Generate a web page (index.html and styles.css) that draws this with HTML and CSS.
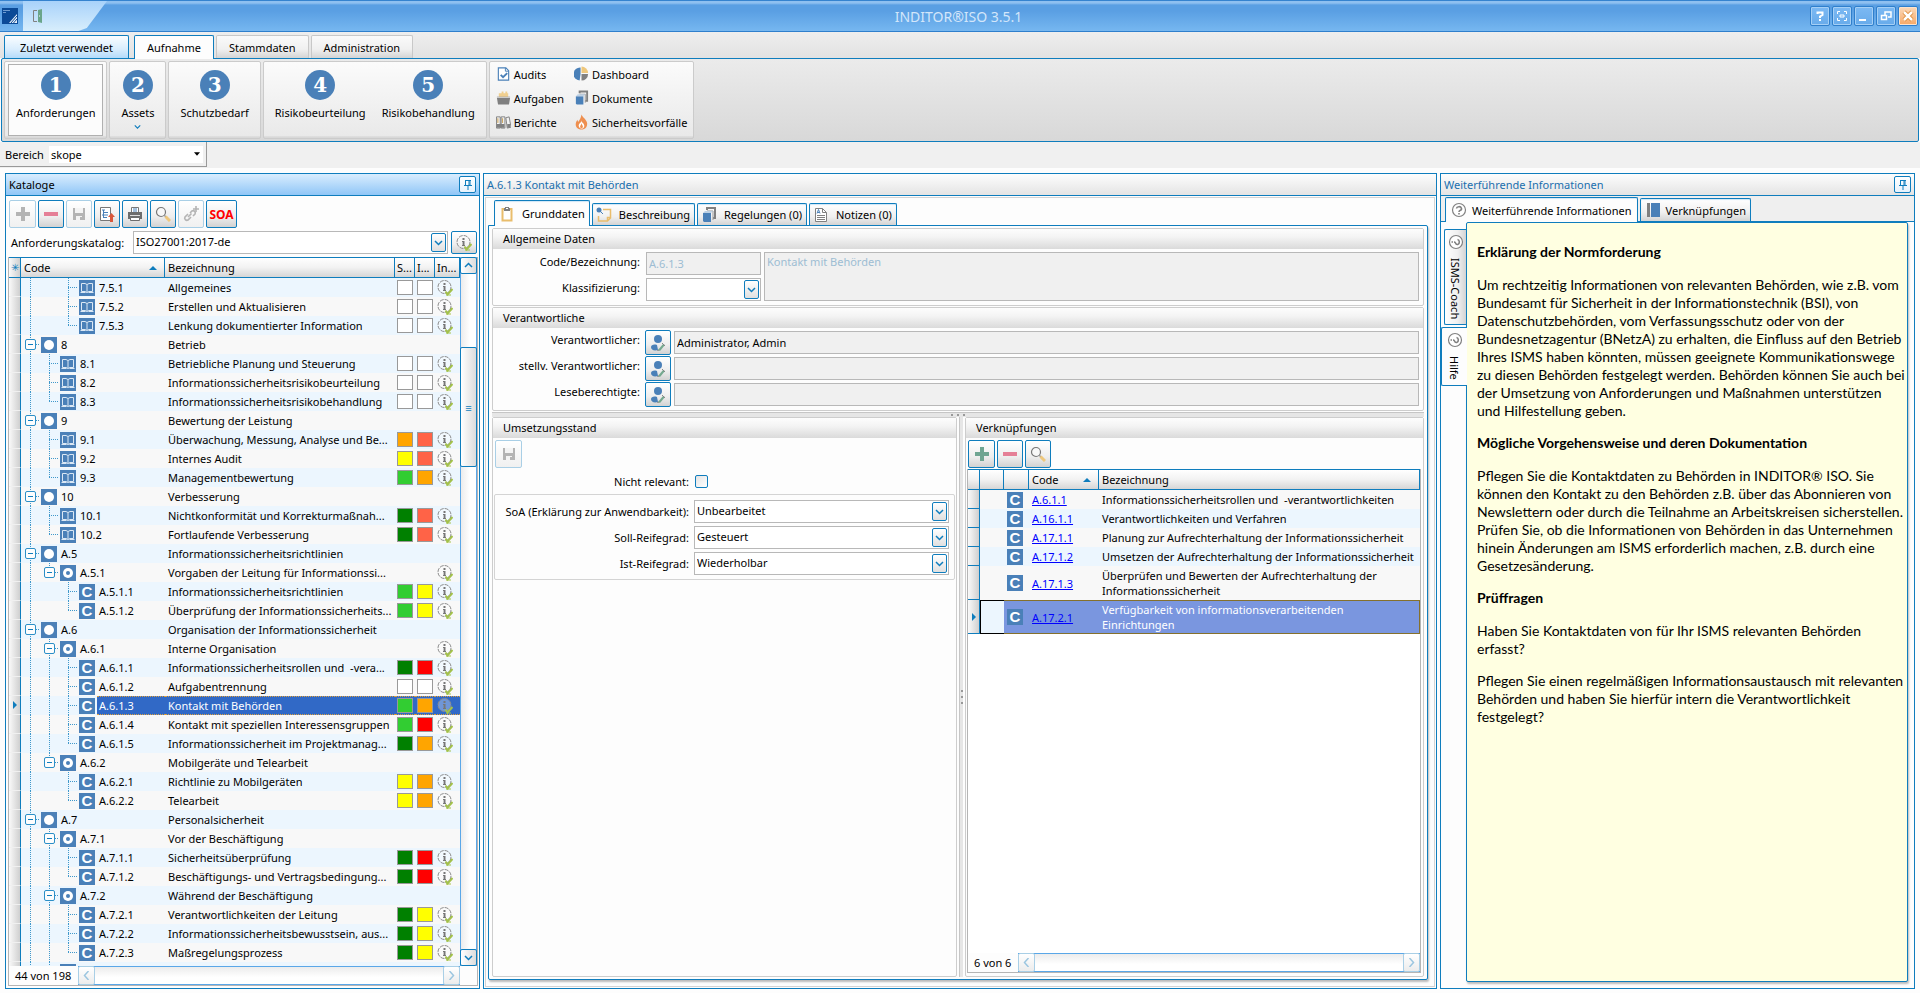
FILE: index.html
```html
<!DOCTYPE html>
<html lang="de">
  <head>
    <meta charset="UTF-8">
    <meta name="viewport" content="width=device-width, initial-scale=1.0">
    <title>INDITOR®ISO 3.5.1</title>
    <link rel="stylesheet" href="styles.css">
  </head>
  <body>
    <svg class="sprite" aria-hidden="true">
      <symbol id="i-plus" viewBox="0 0 16 16"><path d="M6 1h4v5h5v4h-5v5H6v-5H1V6h5z" fill="currentColor"/></symbol>
      <symbol id="i-minus" viewBox="0 0 16 16"><path d="M1 6h14v4H1z" fill="currentColor"/></symbol>
      <symbol id="i-save" viewBox="0 0 16 16"><path d="M2 2h12v12H2z" fill="#b4b4b4"/><path d="M4 2h8v5H4zM5 10h6v4H5z" fill="#f4f4f4"/><path d="M9 11h2v3H9z" fill="#b4b4b4"/></symbol>
      <symbol id="i-export" viewBox="0 0 16 16"><path d="M1.500 1.500h10v13h-10z" fill="#fff" stroke="#777"/><path d="M3 4h3M5 6.500h4M3 9h1M5 9h4M5 11.500h3M4.500 4v8" stroke="#4a80b8" fill="none"/><path d="M12.500 7l3.500 4h-2v5h-3v-5H9z" fill="#d9583b"/></symbol>
      <symbol id="i-print" viewBox="0 0 16 16"><path d="M4.500 6V1.500h7V6" fill="#fff" stroke="#777"/><path d="M6 3h4M6 5h4" stroke="#4a80b8"/><path d="M1 6h14v7H1z" fill="#6d6d6d"/><path d="M3 9h10v1H3z" fill="#ddd"/><path d="M3.500 11.500h9v3h-9z" fill="#fff" stroke="#6d6d6d"/></symbol>
      <symbol id="i-search" viewBox="0 0 16 16"><circle cx="6" cy="6" r="4.500" fill="#f8f8f8" stroke="#777" stroke-width="1.200"/><path d="M9 9l2 2" stroke="#999" stroke-width="1.500"/><path d="M10.500 10.500L15 15" stroke="#eec77c" stroke-width="3"/></symbol>
      <symbol id="i-link" viewBox="0 0 16 16"><g fill="none" stroke="#b4b4b4" stroke-width="1.600"><path d="M5 8L2 11a2.200 2.200 0 0 0 3 3l3-3M5 11l3.500-3.500"/><path d="M7 7l2-2a2.200 2.200 0 0 1 3 3l-2 2"/><path d="M10 3h6M13 0v6"/></g></symbol>
      <symbol id="i-info" viewBox="0 0 16 16"><circle cx="7.500" cy="7" r="6.500" fill="#fff" fill-opacity=".3" stroke="#8b8b8b" stroke-dasharray="4 1"/><path d="M6.500 3h2v2h-2zM6 6h2.500v4H9v1H6v-1h.6V7H6z" fill="#777"/><path d="M8.500 11.500l2 3L15.500 9" fill="none" stroke="#a3c14a" stroke-width="2"/><path d="M9 15h5" stroke="#a3c14a"/></symbol>
      <symbol id="i-user" viewBox="0 0 16 16"><circle cx="8" cy="4" r="4" fill="#4a80b8"/><path d="M1 12c0-2 3-3 6-2l1 5c-4 1-7 0-7-3z" fill="#4a80b8"/><path d="M8 15l5-6 2 1-5 6z" fill="#74a98f"/><path d="M12 8l3 3M7 16l2-1" stroke="#888"/></symbol>
      <symbol id="i-book" viewBox="0 0 16 16"><path d="M0 0h16v16H0z" fill="#4a80b8"/><path d="M2.500 3.500h3.500l2 1 2-1h3.500v8H10l-2 1-2-1H2.500zM8 4.500v8M1.500 12.500h5M9.500 12.500h5" fill="none" stroke="#dbe8f5"/></symbol>
      <symbol id="i-dot" viewBox="0 0 16 16"><path d="M0 0h16v16H0z" fill="#4a80b8"/><circle cx="8" cy="8" r="5" fill="#fff"/></symbol>
      <symbol id="i-target" viewBox="0 0 16 16"><path d="M0 0h16v16H0z" fill="#4a80b8"/><circle cx="8" cy="8" r="5" fill="#fff"/><circle cx="8" cy="8" r="2" fill="#4a80b8"/></symbol>
      <symbol id="i-minusbox" viewBox="0 0 11 11"><rect x=".5" y=".5" width="10" height="10" rx="1.500" fill="#fdfdfd" stroke="#2c8fc7"/><path d="M3 5.500h5" stroke="#0f7dbd"/></symbol>
      <symbol id="i-down" viewBox="0 0 9 9"><path d="M1 3l3.500 3.500L8 3" fill="none" stroke="currentColor" stroke-width="1.500"/></symbol>
      <symbol id="i-up" viewBox="0 0 9 9"><path d="M1 6l3.500-3.500L8 6" fill="none" stroke="currentColor" stroke-width="1.500"/></symbol>
      <symbol id="i-left" viewBox="0 0 9 9"><path d="M6.500 0L2.500 4.500l4 4.500" fill="none" stroke="currentColor" stroke-width="1.500"/></symbol>
      <symbol id="i-right" viewBox="0 0 9 9"><path d="M2.500 0l4 4.500-4 4.500" fill="none" stroke="currentColor" stroke-width="1.500"/></symbol>
      <symbol id="i-sort" viewBox="0 0 8 4"><path d="M0 4l4-4 4 4z" fill="#0f7dbd"/></symbol>
      <symbol id="i-pin" viewBox="0 0 10 10"><path d="M2.500 0v5.500M7 0v5.500M6 0v5.500M2 .5h6M1 5.500h8M5 6v4" fill="none" stroke="#0f7dbd"/></symbol>
      <symbol id="i-help" viewBox="0 0 16 16"><circle cx="8" cy="8" r="6.500" fill="#fff" stroke="#808080" stroke-width="1.200"/><path d="M5.500 6.500a2.500 2 0 1 1 3.500 2q-1 .5-1 1.500M8 11v1.500" fill="none" stroke="#808080" stroke-width="1.600"/></symbol>
      <symbol id="i-clipboard" viewBox="0 0 16 16"><path d="M3.500 3h9v11.500h-9z" fill="#fff" stroke="#e9bd6c" stroke-width="2"/><path d="M5 2h1V1h4v1h1v3H5z" fill="#808080"/><path d="M7 2h2v1H7z" fill="#fff"/></symbol>
      <symbol id="i-note" viewBox="0 0 16 16"><path d="M7 2.500h7.500v8.500l-3 3h-9V9M11.500 14v-3.500h3" fill="none" stroke="#e9bd6c" stroke-width="1.500"/><circle cx="3" cy="3" r="2.500" fill="#4a80b8"/><path d="M4 4l3 3" stroke="#4a80b8"/></symbol>
      <symbol id="i-docs" viewBox="0 0 16 16"><path d="M6 3V1h8v10h-2" fill="none" stroke="#808080" stroke-width="2"/><path d="M6 4h6v9" fill="none" stroke="#999"/><path d="M2 6h8v9H3L2 14z" fill="#4a80b8"/><path d="M2 6l2-2h8l-2 2z" fill="#bcd0e4"/></symbol>
      <symbol id="i-notes" viewBox="0 0 16 16"><path d="M2.500 1.500h7l4 4v9h-11z" fill="#fff" stroke="#808080"/><path d="M9.500 1.500v4h4" fill="none" stroke="#808080"/><path d="M4 8.500h8M4 10.500h8M4 12.500h8" stroke="#808080"/><path d="M4 6.500l1.500-4 1.500 4M4.500 5.500h2" fill="none" stroke="#4a80b8"/></symbol>
      <symbol id="i-bookside" viewBox="0 0 16 16"><path d="M2 1h3v14H2z" fill="#808080"/><path d="M6 1h9v14H6z" fill="#4a80b8"/></symbol>
      <symbol id="i-audit" viewBox="0 0 16 16"><path d="M2.500 1.500h8l3 3v10h-11z" fill="#fff" stroke="#4a80b8" stroke-width="1.200"/><path d="M10 1.500V5h3.500" fill="none" stroke="#4a80b8"/><path d="M5 9l2.500 2.500L12 7" fill="none" stroke="#4a80b8" stroke-width="2"/></symbol>
      <symbol id="i-tasks" viewBox="0 0 16 16"><path d="M3 7V3h3V1h2v2h2V1h2v2h1v4z" fill="#f0cf8f"/><path d="M1 8h14l-1 6q0 1-1 1H3q-1 0-1-1z" fill="#808080"/><path d="M1 7h14" stroke="#aaa"/></symbol>
      <symbol id="i-reports" viewBox="0 0 16 16"><path d="M.5 2.500h4v12h-4zM5.500 2.500h4v12h-4zM10.500 3.500l3.500-1 2 11-4 1z" fill="#f3f3f3" stroke="#808080"/><path d="M2 4v5M7 4v5" stroke="#c79d4d"/><path d="M1 10h8v4H1zM12 10h3v4h-3z" fill="#808080"/></symbol>
      <symbol id="i-pie" viewBox="0 0 16 16"><path d="M7 1v7l-1 7A7 7 0 0 1 7 1z" fill="#4a80b8"/><path d="M8 0a7 7 0 0 1 7 7H8z" fill="#eec77c"/><path d="M8 8h7a7 7 0 0 1-7 7z" fill="#808080"/></symbol>
      <symbol id="i-fire" viewBox="0 0 16 16"><path d="M8 0c1 3 5 5 6 9 .5 4-2 7-6 7s-7-3-6-7c.4-1.600 1-2 1.500-3.500.6 1 .8 1.600.8 2.500C6 6 7.500 3.500 8 0z" fill="#ee8f4f"/><path d="M8 6c0 3 3 3 3 6 0 2-1 3-3 3s-3-2-3-3c0-3 3-3 3-6z" fill="#fff"/><path d="M8 9c0 2 1.500 2 1.500 4S6.500 15 6.500 13 8 11 8 9z" fill="#ee8f4f"/></symbol>
    </svg>

    <header class="titlebar">
      <svg class="titlebar__logo" viewBox="0 0 16 16"><path d="M0 0h16v16H0z" fill="#0b4a97"/><path d="M1 2.500h7M1 4.500h3" stroke="#6f9cd0"/><path d="M7 15L15 6v9z" fill="#e8f0f8"/><path d="M9 15l6-7M11.500 15l3.500-4" stroke="#0b4a97"/></svg>
      <div class="titlebar__quick">
        <svg viewBox="0 0 16 16"><path d="M6 2.500H2.500v11H6" fill="none" stroke="#808080"/><path d="M7 2l4-1v14l-4-1z" fill="#6aa58a"/><path d="M8 8h1" stroke="#fff"/></svg>
      </div>
      <h1 class="titlebar__text">INDITOR®ISO 3.5.1</h1>
      <div class="titlebar__buttons">
        <button class="winbtn" aria-label="Hilfe"><svg viewBox="0 0 12 12"><path d="M3.500 4V2.500h5V5L6 6.500V8M6 9v2" fill="none" stroke="#fff" stroke-width="2"/></svg></button>
        <button class="winbtn" aria-label="Vollbild"><svg viewBox="0 0 12 12"><path d="M1.500 4V1.500H4M8 1.500h2.500V4M1.500 8v2.500H4M8 10.500h2.500V8M4 5h4v2H4z" fill="none" stroke="#fff"/></svg></button>
        <button class="winbtn" aria-label="Minimieren"><svg viewBox="0 0 12 12"><path d="M1 9h7v2H1z" fill="#fff"/></svg></button>
        <button class="winbtn" aria-label="Wiederherstellen"><svg viewBox="0 0 12 12"><path d="M5 5V2h6v5H8M1.500 5.500h5v4h-5z" fill="none" stroke="#fff" stroke-width="1.500"/></svg></button>
        <button class="winbtn winbtn--close" aria-label="Schließen"><svg viewBox="0 0 12 12"><path d="M2 2l8 8M10 2l-8 8" stroke="#d9822b" stroke-width="4"/><path d="M2 2l8 8M10 2l-8 8" stroke="#fff" stroke-width="2.500"/></svg></button>
      </div>
    </header>

    <nav class="tabs">
      <button class="tabs__tab tabs__tab--recent">Zuletzt verwendet</button>
      <button class="tabs__tab tabs__tab--active">Aufnahme</button>
      <button class="tabs__tab">Stammdaten</button>
      <button class="tabs__tab">Administration</button>
    </nav>

    <section class="ribbon">
      <div class="ribbon__group">
        <button class="step step--active"><span class="step__no">1</span>Anforderungen</button>
      </div>
      <div class="ribbon__group">
        <button class="step"><span class="step__no">2</span>Assets<svg class="step__more"><use href="#i-down"/></svg></button>
      </div>
      <div class="ribbon__group">
        <button class="step"><span class="step__no">3</span>Schutzbedarf</button>
      </div>
      <div class="ribbon__group">
        <button class="step"><span class="step__no">4</span>Risikobeurteilung</button>
        <button class="step"><span class="step__no">5</span>Risikobehandlung</button>
      </div>
      <div class="ribbon__group ribbon__group--grid">
        <button class="link"><svg><use href="#i-audit"/></svg>Audits</button>
        <button class="link"><svg><use href="#i-pie"/></svg>Dashboard</button>
        <button class="link"><svg><use href="#i-tasks"/></svg>Aufgaben</button>
        <button class="link"><svg><use href="#i-docs"/></svg>Dokumente</button>
        <button class="link"><svg><use href="#i-reports"/></svg>Berichte</button>
        <button class="link"><svg><use href="#i-fire"/></svg>Sicherheitsvorfälle</button>
      </div>
    </section>

    <div class="scope">
      <div class="scope__box">
        <label for="bereich">Bereich</label>
        <div class="scope__combo">
          <select id="bereich"><option>skope</option></select>
          <svg viewBox="0 0 7 4"><path d="M0 0h7L3.500 4z"/></svg>
        </div>
      </div>
    </div>

    <main class="main">
      <section class="panel panel--left">
        <header class="panel__head panel__head--active">
          <h2>Kataloge</h2>
          <button class="pin" aria-label="Anheften"><svg><use href="#i-pin"/></svg></button>
        </header>
        <div class="toolbar">
          <button class="tool is-off c-gray" aria-label="Neu"><svg><use href="#i-plus"/></svg></button>
          <button class="tool c-red" aria-label="Löschen"><svg><use href="#i-minus"/></svg></button>
          <button class="tool is-off" aria-label="Speichern"><svg><use href="#i-save"/></svg></button>
          <button class="tool" aria-label="Exportieren"><svg><use href="#i-export"/></svg></button>
          <button class="tool" aria-label="Drucken"><svg><use href="#i-print"/></svg></button>
          <button class="tool" aria-label="Suchen"><svg><use href="#i-search"/></svg></button>
          <button class="tool is-off" aria-label="Verknüpfen"><svg><use href="#i-link"/></svg></button>
          <button class="tool tool--soa">SOA</button>
        </div>
        <div class="catalog">
          <label for="katalog">Anforderungskatalog:</label>
          <div class="combo">
            <select id="katalog"><option>ISO27001:2017-de</option></select>
            <span class="combo__btn"><svg><use href="#i-down"/></svg></span>
          </div>
          <button class="tool tool--small" aria-label="Info"><svg><use href="#i-info"/></svg></button>
        </div>
        <div class="grid">
          <div class="grid__body">
            <div class="grid__view">
              <table class="tree">
                <colgroup><col class="w-ind"><col class="w-code"><col><col class="w-sw"><col class="w-sw"><col class="w-info"></colgroup>
                <thead>
                  <tr>
                    <th class="ind">✳</th>
                    <th><span class="sorted">Code<svg><use href="#i-sort"/></svg></span></th>
                    <th>Bezeichnung</th>
                    <th>S...</th>
                    <th>I...</th>
                    <th>In...</th>
                  </tr>
                </thead>
                <tbody id="tree"></tbody>
              </table>
            </div>
            <div class="vscroll">
              <button class="vscroll__btn" aria-label="Nach oben"><svg><use href="#i-up"/></svg></button>
              <div class="vscroll__track"><div class="vscroll__thumb">≡</div></div>
              <button class="vscroll__btn" aria-label="Nach unten"><svg><use href="#i-down"/></svg></button>
            </div>
          </div>
          <div class="grid__foot">
            <span class="grid__count">44 von 198</span>
            <div class="hscroll">
              <button class="hscroll__btn" aria-label="Nach links"><svg><use href="#i-left"/></svg></button>
              <div class="hscroll__track"></div>
              <button class="hscroll__btn" aria-label="Nach rechts"><svg><use href="#i-right"/></svg></button>
            </div>
          </div>
        </div>
      </section>

      <section class="panel panel--center">
        <header class="panel__head"><h2>A.6.1.3 Kontakt mit Behörden</h2></header>
        <div class="panel__frame">
          <div class="subtabs">
            <button class="subtab subtab--active"><svg><use href="#i-clipboard"/></svg>Grunddaten</button>
            <button class="subtab"><svg><use href="#i-note"/></svg>Beschreibung</button>
            <button class="subtab"><svg><use href="#i-docs"/></svg>Regelungen (0)</button>
            <button class="subtab"><svg><use href="#i-notes"/></svg>Notizen (0)</button>
          </div>
          <div class="page">
            <section class="group">
              <h3 class="group__head">Allgemeine Daten</h3>
              <div class="form form--general">
                <label for="code">Code/Bezeichnung:</label>
                <input class="field" id="code" value="A.6.1.3" disabled>
                <textarea class="field form__desc" aria-label="Bezeichnung" disabled>Kontakt mit Behörden</textarea>
                <label for="klasse">Klassifizierung:</label>
                <div class="combo">
                  <select id="klasse"><option></option></select>
                  <span class="combo__btn"><svg><use href="#i-down"/></svg></span>
                </div>
              </div>
            </section>
            <section class="group">
              <h3 class="group__head">Verantwortliche</h3>
              <div class="form form--people">
                <label for="verantw">Verantwortlicher:</label>
                <button class="tool tool--user" aria-label="Auswählen"><svg><use href="#i-user"/></svg></button>
                <input class="field" id="verantw" value="Administrator, Admin" readonly>
                <label for="stellv">stellv. Verantwortlicher:</label>
                <button class="tool tool--user" aria-label="Auswählen"><svg><use href="#i-user"/></svg></button>
                <input class="field" id="stellv" readonly>
                <label for="lese">Leseberechtigte:</label>
                <button class="tool tool--user" aria-label="Auswählen"><svg><use href="#i-user"/></svg></button>
                <input class="field" id="lese" readonly>
              </div>
            </section>
            <div class="split split--h"><i></i><i></i><i></i></div>
            <div class="lower">
              <section class="group group--state">
                <h3 class="group__head">Umsetzungsstand</h3>
                <div class="toolbar toolbar--group">
                  <button class="tool is-off" aria-label="Speichern"><svg><use href="#i-save"/></svg></button>
                </div>
                <div class="check">
                  <label for="relevant">Nicht relevant:</label>
                  <input type="checkbox" id="relevant">
                </div>
                <div class="form form--state">
                  <label for="soa">SoA (Erklärung zur Anwendbarkeit):</label>
                  <div class="combo">
                    <select id="soa"><option>Unbearbeitet</option></select>
                    <span class="combo__btn"><svg><use href="#i-down"/></svg></span>
                  </div>
                  <label for="soll">Soll-Reifegrad:</label>
                  <div class="combo">
                    <select id="soll"><option>Gesteuert</option></select>
                    <span class="combo__btn"><svg><use href="#i-down"/></svg></span>
                  </div>
                  <label for="ist">Ist-Reifegrad:</label>
                  <div class="combo">
                    <select id="ist"><option>Wiederholbar</option></select>
                    <span class="combo__btn"><svg><use href="#i-down"/></svg></span>
                  </div>
                </div>
              </section>
              <div class="split split--v"><i></i><i></i><i></i></div>
              <section class="group group--links">
                <h3 class="group__head">Verknüpfungen</h3>
                <div class="toolbar toolbar--group">
                  <button class="tool c-green" aria-label="Hinzufügen"><svg><use href="#i-plus"/></svg></button>
                  <button class="tool c-red" aria-label="Entfernen"><svg><use href="#i-minus"/></svg></button>
                  <button class="tool" aria-label="Suchen"><svg><use href="#i-search"/></svg></button>
                </div>
                <div class="grid grid--links">
                  <div class="grid__view">
                    <table class="links">
                      <colgroup><col class="w-ind"><col class="w-a"><col class="w-b"><col class="w-link"><col></colgroup>
                      <thead>
                        <tr>
                          <th></th>
                          <th></th>
                          <th></th>
                          <th><span class="sorted">Code<svg><use href="#i-sort"/></svg></span></th>
                          <th>Bezeichnung</th>
                        </tr>
                      </thead>
                      <tbody>
                        <tr><td class="ind"></td><td></td><td><b class="cico">C</b></td><td><a href="#">A.6.1.1</a></td><td>Informationssicherheitsrollen und&nbsp; -verantwortlichkeiten</td></tr>
                        <tr><td class="ind"></td><td></td><td><b class="cico">C</b></td><td><a href="#">A.16.1.1</a></td><td>Verantwortlichkeiten und Verfahren</td></tr>
                        <tr><td class="ind"></td><td></td><td><b class="cico">C</b></td><td><a href="#">A.17.1.1</a></td><td>Planung zur Aufrechterhaltung der Informationssicherheit</td></tr>
                        <tr><td class="ind"></td><td></td><td><b class="cico">C</b></td><td><a href="#">A.17.1.2</a></td><td>Umsetzen der Aufrechterhaltung der Informationssicherheit</td></tr>
                        <tr class="tall"><td class="ind"></td><td></td><td><b class="cico">C</b></td><td><a href="#">A.17.1.3</a></td><td>Überprüfen und Bewerten der Aufrechterhaltung der<br>Informationssicherheit</td></tr>
                        <tr class="tall sel"><td class="ind"><svg class="cursor" viewBox="0 0 4 8"><path d="M0 0l4 4-4 4z"/></svg></td><td class="focus"></td><td><b class="cico">C</b></td><td><a href="#">A.17.2.1</a></td><td>Verfügbarkeit von informationsverarbeitenden<br>Einrichtungen</td></tr>
                      </tbody>
                    </table>
                  </div>
                  <div class="grid__foot">
                    <span class="grid__count">6 von 6</span>
                    <div class="hscroll">
                      <button class="hscroll__btn" aria-label="Nach links"><svg><use href="#i-left"/></svg></button>
                      <div class="hscroll__track"></div>
                      <button class="hscroll__btn" aria-label="Nach rechts"><svg><use href="#i-right"/></svg></button>
                    </div>
                  </div>
                </div>
              </section>
            </div>
          </div>
        </div>
      </section>

      <section class="panel panel--right">
        <header class="panel__head">
          <h2>Weiterführende Informationen</h2>
          <button class="pin" aria-label="Anheften"><svg><use href="#i-pin"/></svg></button>
        </header>
        <div class="infotabs">
          <button class="infotab infotab--active"><svg><use href="#i-help"/></svg>Weiterführende Informationen</button>
          <button class="infotab"><svg><use href="#i-bookside"/></svg>Verknüpfungen</button>
        </div>
        <div class="info">
          <div class="sidetabs">
            <button class="sidetab"><svg><use href="#i-help"/></svg>ISMS-Coach</button>
            <button class="sidetab sidetab--active"><svg><use href="#i-help"/></svg>Hilfe</button>
          </div>
          <article class="help">
            <h3>Erklärung der Normforderung</h3>
            <p>Um rechtzeitig Informationen von relevanten Behörden, wie z.B. vom<br>
              Bundesamt für Sicherheit in der Informationstechnik (BSI), von<br>
              Datenschutzbehörden, vom Verfassungsschutz oder von der<br>
              Bundesnetzagentur (BNetzA) zu erhalten, die Einfluss auf den Betrieb<br>
              Ihres ISMS haben könnten, müssen geeignete Kommunikationswege<br>
              zu diesen Behörden festgelegt werden. Behörden können Sie auch bei<br>
              der Umsetzung von Anforderungen und Maßnahmen unterstützen<br>
              und Hilfestellung geben.</p>
            <h3>Mögliche Vorgehensweise und deren Dokumentation</h3>
            <p>Pflegen Sie die Kontaktdaten zu Behörden in INDITOR® ISO. Sie<br>
              können den Kontakt zu den Behörden z.B. über das Abonnieren von<br>
              Newslettern oder durch die Teilnahme an Arbeitskreisen sicherstellen.<br>
              Prüfen Sie, ob die Informationen von Behörden in das Unternehmen<br>
              hinein Änderungen am ISMS erforderlich machen, z.B. durch eine<br>
              Gesetzesänderung.</p>
            <h3>Prüffragen</h3>
            <p>Haben Sie Kontaktdaten von für Ihr ISMS relevanten Behörden<br>
              erfasst?</p>
            <p>Pflegen Sie einen regelmäßigen Informationsaustausch mit relevanten<br>
              Behörden und haben Sie hierfür intern die Verantwortlichkeit<br>
              festgelegt?</p>
          </article>
        </div>
      </section>
    </main>

    <script src="script.js"></script>
  </body>
</html>
```

FILE: styles.css
```css
* {
  box-sizing: border-box;
}

html,
body {
  margin: 0;
  height: 100%;
}

body {
  display: flex;
  flex-direction: column;
  overflow: hidden;
  background: #fdfdfd;
  color: #000;
  font-family: "Noto Sans", "Open Sans", sans-serif;
  font-size: 11px;
  line-height: 15px;
}

button,
input,
select,
textarea {
  margin: 0;
  padding: 0;
  border: 0;
  border-radius: 0;
  background: none;
  color: inherit;
  font: inherit;
}

h1,
h2,
h3,
p {
  margin: 0;
  font-size: inherit;
  font-weight: normal;
}

svg {
  display: block;
  flex: none;
  width: 16px;
  height: 16px;
}

.sprite {
  display: none;
}

/* title bar */

.titlebar {
  display: flex;
  align-items: center;
  flex: none;
  height: 32px;
  padding: 0 2px;
  border-top: 1px solid #3583cf;
  border-bottom: 1px solid #2f7fcc;
  background: linear-gradient(#8fc0f0 0, #8fc0f0 2px, #5a9fe3 4px, #5a9fe3 10px, #76b7f0 100%);
}

.titlebar__quick {
  display: flex;
  align-items: center;
  width: 84px;
  height: 30px;
  margin-left: 5px;
  padding-left: 8px;
  background: linear-gradient(#a8d2fa, #d8eefc);
  clip-path: polygon(0 0, 100% 0, 76% 90%, 66% 100%, 0 100%);
}

.titlebar__text {
  flex: 1;
  color: #d3e6fa;
  font-size: 14px;
  text-align: center;
}

.titlebar__buttons {
  display: flex;
  gap: 2px;
}

.winbtn {
  display: grid;
  place-items: center;
  width: 20px;
  height: 20px;
  border: 1px solid #2f7fcc;
  border-radius: 2px;
  background: linear-gradient(#7cb9f3, #68abea);
  box-shadow: inset 0 0 0 1px #a5cff5;
}

.winbtn svg {
  width: 12px;
  height: 12px;
}

.winbtn--close {
  background: linear-gradient(#fbd9ba, #f7a866);
  box-shadow: inset 0 0 0 1px #fde3cc;
}

/* ribbon */

.tabs {
  display: flex;
  flex: none;
  align-items: flex-end;
  gap: 2px;
  height: 26px;
  padding-left: 4px;
  background: linear-gradient(#eee, #e2e2e2);
}

.tabs__tab {
  height: 23px;
  padding: 0 12px;
  border: 1px solid #c8c8c8;
  border-bottom: 0;
  border-radius: 2px 2px 0 0;
  background: linear-gradient(#fafafa, #f0f0f0 60%, #d4d4d4);
}

.tabs__tab--recent {
  margin-right: 3px;
  padding: 0 15px;
  border-color: #0f7dbd;
  background: linear-gradient(#fafdff, #d9edfd 60%, #b4dbfa);
}

.tabs__tab--active {
  z-index: 1;
  height: 24px;
  margin-bottom: -1px;
  border-color: #0f7dbd;
  background: #fdfdfd;
}

.ribbon {
  display: flex;
  flex: none;
  gap: 2px;
  height: 84px;
  margin: 0 1px;
  padding: 2px;
  border: 1px solid #0f7dbd;
  border-radius: 2px;
  background: linear-gradient(#ebebeb, #d8d8d8);
}

.ribbon__group {
  display: flex;
  padding: 2px 3px 3px;
  border: 1px solid #cbcbcb;
  border-radius: 2px;
  background: linear-gradient(#fbfbfb, #e9e9e9 74px, #d2d2d2 75px, #dedede);
}

.step {
  display: flex;
  flex-direction: column;
  align-items: center;
  height: 72px;
  padding: 5px 7px 0;
  border: 1px solid transparent;
}

.step--active {
  border-color: #b0b0b0;
  background: #fcfcfc;
}

.step__no {
  width: 30px;
  height: 30px;
  margin-bottom: 5px;
  border-radius: 50%;
  background: #4a80b8;
  color: #fff;
  font: bold 20px/30px "DejaVu Serif", serif;
  text-align: center;
}

.step__more {
  width: 7px;
  height: 7px;
  margin-top: 3px;
  color: #0f7dbd;
}

.ribbon__group--grid {
  display: grid;
  grid-template-columns: auto auto;
  column-gap: 10px;
  padding: 0 6px 4px;
}

.link {
  display: flex;
  align-items: center;
  gap: 3px;
}

.link svg {
  width: 15px;
}

.scope {
  flex: none;
  height: 26px;
  background: #f0f0f0;
}

.scope__box {
  display: flex;
  align-items: center;
  justify-content: space-between;
  width: 207px;
  height: 25px;
  padding: 0 3px 0 5px;
  border-right: 1px solid #999;
  border-bottom: 1px solid #999;
}

.scope__combo {
  display: flex;
  align-items: center;
  width: 154px;
  height: 17px;
  padding: 0 3px 0 2px;
  background: #fff;
}

.scope__combo select,
.combo select {
  flex: 1;
  min-width: 0;
  appearance: none;
  outline: 0;
}

.scope__combo svg {
  width: 6px;
  height: 4px;
}

/* panels */

.main {
  display: flex;
  flex: 1;
  gap: 3px;
  min-height: 0;
  padding: 5px 5px 4px;
}

.panel {
  display: flex;
  flex-direction: column;
  min-height: 0;
  border: 1px solid #0f7dbd;
}

.panel--left,
.panel--right {
  flex: none;
  width: 475px;
}

.panel--center {
  flex: 1;
  min-width: 0;
}

.panel__head {
  display: flex;
  flex: none;
  align-items: center;
  justify-content: space-between;
  height: 22px;
  padding: 0 3px;
  border-bottom: 1px solid #0f7dbd;
  background: linear-gradient(#fdfdfd, #e4e4e4);
  color: #1a6fae;
}

.panel__head--active {
  background: linear-gradient(#d9edfe, #90c6f7);
  color: #000;
}

.pin {
  display: grid;
  place-items: center;
  width: 17px;
  height: 17px;
  border: 1px solid #0f7dbd;
  border-radius: 2px;
  background: linear-gradient(#fff, #e6f2fc);
}

.pin svg {
  width: 10px;
  height: 10px;
}

.toolbar {
  display: flex;
  flex: none;
  gap: 2px;
  padding: 4px 3px 3px;
}

.toolbar--group {
  padding: 2px 2px 1px;
}

.tool {
  display: grid;
  place-items: center;
  width: 26px;
  height: 28px;
  border: 1px solid #0f7dbd;
  border-radius: 2px;
  background: linear-gradient(#fff, #eee 60%, #d2d2d2);
}

.tool:first-child {
  width: 27px;
}

.tool.is-off {
  border-color: #a9cfe6;
  background: linear-gradient(#fff, #f0f0f0);
}

.tool--soa {
  width: 31px;
  color: #f00;
  font-size: 12px;
  font-weight: bold;
}

.tool--small {
  height: 23px;
}

.tool--user {
  height: 25px;
}

.c-gray {
  color: #b4b4b4;
}

.c-red {
  color: #e57f96;
}

.c-green {
  color: #6fa592;
}

.catalog {
  display: flex;
  flex: none;
  align-items: center;
  height: 23px;
  margin-bottom: 3px;
  padding: 0 2px 0 5px;
}

.catalog label {
  width: 122px;
}

.catalog .combo {
  flex: 1;
  margin-right: 3px;
}

.combo {
  display: flex;
  height: 23px;
  padding: 1px;
  border: 1px solid #b8b8b8;
  background: #fff;
}

.combo select {
  padding: 0 0 2px 1px;
}

.combo__btn {
  display: grid;
  place-items: center;
  width: 15px;
  height: 19px;
  border: 1px solid #0f7dbd;
  border-radius: 2px;
  background: linear-gradient(#fff, #e0e0e0);
  color: #0f7dbd;
}

.combo__btn svg,
.vscroll svg,
.hscroll svg {
  width: 9px;
  height: 9px;
}

/* grids */

.grid {
  display: flex;
  flex: 1;
  flex-direction: column;
  min-height: 0;
  margin: 0 1px 2px 2px;
  border: 1px solid #b5b5b5;
  border-top: 0;
}

.grid__body {
  display: flex;
  flex: 1;
  min-height: 0;
}

.grid__view {
  flex: 1;
  min-height: 0;
  overflow: hidden;
  background: #fff;
}

table {
  width: 100%;
  table-layout: fixed;
  border-collapse: separate;
  border-spacing: 0;
}

th,
td {
  height: 19px;
  padding: 0 0 0 3px;
  overflow: hidden;
  white-space: nowrap;
  text-align: left;
  vertical-align: middle;
}

th {
  height: 21px;
  border: solid #0f7dbd;
  border-width: 1px 1px 1px 0;
  background: linear-gradient(#fff, #f2f2f2 50%, #d6d6d6);
  font-weight: normal;
}

tbody tr:nth-child(odd) {
  background: #ecf6fe;
}

tbody tr:nth-child(even) {
  background: #f8f8f8;
}

.w-ind { width: 12px; }
.w-code { width: 144px; }
.w-sw { width: 20px; }
.w-info { width: 25px; }
.w-a { width: 24px; }
.w-b { width: 25px; }
.w-link { width: 70px; }

.ind {
  padding: 0;
  border-right: 1px solid #0f7dbd;
  background: linear-gradient(90deg, #fafafa, #cfcfcf);
  text-align: center;
}

th.ind {
  color: #0f7dbd;
  font-size: 10px;
}

.tree td.ind {
  border-bottom: 1px solid #f0f0f0;
}

.tree th:nth-child(n+4),
.tree td.sw,
.tree td.inf {
  padding-left: 2px;
}

.sorted {
  display: flex;
  align-items: center;
  justify-content: space-between;
  padding-right: 7px;
}

.sorted svg {
  width: 8px;
  height: 4px;
}

.tree td.code {
  padding: 0;
}

.node {
  display: flex;
  align-items: center;
  height: 19px;
}

.node__text {
  flex: 1;
  height: 19px;
  margin-left: 2px;
  padding-left: 2px;
  line-height: 19px;
}

.node__icon {
  margin-left: 1px;
}

/* dotted tree guides, one 19px cell per level */

.guide {
  --v: repeating-linear-gradient(#3f98cb 0 1px, transparent 1px 2px);
  --h: repeating-linear-gradient(90deg, #3f98cb 0 1px, transparent 1px 2px);
  display: grid;
  place-items: center;
  flex: none;
  width: 19px;
  height: 19px;
  background-repeat: no-repeat;
}

.guide svg {
  width: 11px;
  height: 11px;
}

.guide--line {
  background-image: var(--v);
  background-position: 9px 0;
  background-size: 1px 100%;
}

.guide--tee {
  background-image: var(--v), var(--h);
  background-position: 9px 0, 9px 9px;
  background-size: 1px 100%, 10px 1px;
}

.guide--end {
  background-image: var(--v), var(--h);
  background-position: 9px 0, 9px 9px;
  background-size: 1px 10px, 10px 1px;
}

.cico {
  display: block;
  flex: none;
  width: 16px;
  height: 16px;
  background: #4a80b8;
  color: #fff;
  font: bold 15px/16px "Liberation Sans", sans-serif;
  text-align: center;
}

.swatch {
  width: 16px;
  height: 15px;
  border: 1px solid #999;
}

.tree .sel .node__text,
.tree .sel td:nth-child(n+3) {
  border: dotted #e0a13c;
  border-width: 1px 0;
  background: #3169c6;
  color: #fff;
}

.tree .sel .node__text {
  line-height: 17px;
}

.cursor {
  width: 4px;
  height: 8px;
  margin: 0 auto;
  fill: #0f7dbd;
}

.grid__foot {
  display: flex;
  flex: none;
  align-items: center;
  height: 19px;
}

.grid__count {
  padding: 0 7px 0 6px;
}

.vscroll {
  display: flex;
  flex: none;
  flex-direction: column;
  width: 17px;
  border: solid #5aa7e8;
  border-width: 0 1px;
  background: linear-gradient(90deg, #ececec, #fff 60%);
}

.vscroll__btn,
.hscroll__btn,
.vscroll__thumb {
  display: grid;
  place-items: center;
  flex: none;
  border: 1px solid #0f7dbd;
  border-radius: 2px;
  background: linear-gradient(90deg, #fff, #dcdcdc);
  color: #0f7dbd;
}

.vscroll__btn {
  height: 17px;
  margin: 0 -1px;
}

.vscroll__track {
  flex: 1;
  padding-top: 73px;
}

.vscroll__thumb {
  height: 120px;
  margin: 0 -1px;
}

.hscroll {
  display: flex;
  flex: 1;
  height: 19px;
  border: solid #5aa7e8;
  border-width: 1px 0;
  background: linear-gradient(#ececec, #fff 60%);
}

.panel--left .hscroll {
  margin-right: 17px;
}

.hscroll__track {
  flex: 1;
}

.hscroll__btn {
  width: 17px;
  margin: -1px 0;
  border-color: #a9cfe6;
  background: linear-gradient(#fff, #ececec);
  color: #9cc6e0;
}

/* centre */

.panel__frame {
  display: flex;
  flex: 1;
  flex-direction: column;
  min-height: 0;
  margin: 1px;
  padding: 2px 6px 6px 2px;
  border: 1px solid #d4d4d4;
}

.subtabs {
  display: flex;
  flex: none;
  align-items: flex-end;
  gap: 2px;
  height: 25px;
  padding-left: 6px;
}

.subtab,
.infotab {
  display: flex;
  align-items: center;
  height: 22px;
  border: 1px solid #0f7dbd;
  border-bottom: 0;
  border-radius: 2px 2px 0 0;
  background: linear-gradient(#fff, #f0f0f0 60%, #d4d4d4);
  box-shadow: inset 0 1px 1px #cfe6f7;
}

.subtab {
  gap: 7px;
  padding: 0 4px 0 3px;
}

.subtab--active {
  z-index: 1;
  height: 26px;
  margin-bottom: -1px;
  padding: 0 4px;
  background: #fdfdfd;
}

.page {
  display: flex;
  flex: 1;
  flex-direction: column;
  min-height: 0;
  padding: 2px 3px;
  border: 1px solid #0f7dbd;
  border-radius: 0 2px 2px 2px;
  box-shadow: 1px 2px 2px #bbb;
}

.group {
  flex: none;
  margin-bottom: 1px;
  border: 1px solid #cdcdcd;
  border-radius: 2px;
}

.group__head {
  height: 20px;
  padding-left: 10px;
  background: linear-gradient(#fdfdfd, #f4f4f4 40%, #dadada);
  line-height: 20px;
}

.form {
  display: grid;
  gap: 3px;
}

.form label {
  line-height: 19px;
  text-align: right;
  white-space: nowrap;
}

.form--general {
  grid-template-columns: 150px 115px 1fr;
  padding: 3px 4px 4px 0;
}

.form--general label {
  padding-right: 3px;
}

.form__desc {
  grid-column: 3;
  grid-row: 1 / 3;
  resize: none;
}

.form--people {
  grid-template-columns: 152px 26px 1fr;
  gap: 1px 0;
  padding: 2px 4px 3px 0;
}

.form--people label {
  padding-right: 5px;
}

.form--people .field {
  margin: 1px 0 1px 3px;
}

.field {
  height: 23px;
  padding: 0 2px;
  border: 1px solid #b8b8b8;
  background: #f0f0f0;
  outline: 0;
}

.field.form__desc {
  height: auto;
  padding-top: 1px;
}

.field:disabled {
  color: #9dbdd3;
}

.split {
  display: flex;
  flex: none;
  align-items: center;
  justify-content: center;
  gap: 4px;
  background: #e6e6e6;
}

.split i {
  width: 2px;
  height: 2px;
  background: #999;
}

.split--h {
  height: 5px;
  border-top: 1px solid #c6c6c6;
}

.split--v {
  flex-direction: column;
  width: 4px;
  margin: 0 2px;
  border-left: 1px solid #c6c6c6;
}

.lower {
  display: flex;
  flex: 1;
  min-height: 0;
}

.lower .group {
  display: flex;
  flex-direction: column;
  margin: 0;
}

.lower .group--state {
  flex: 1;
}

.lower .group__head {
  flex: none;
}

.group--links {
  width: 459px;
}

.check {
  display: flex;
  align-items: center;
  gap: 6px;
  height: 25px;
}

.check label {
  width: 196px;
  text-align: right;
}

.check input {
  width: 13px;
  height: 13px;
  appearance: none;
  border: 1px solid #0f7dbd;
  border-radius: 2px;
  background: linear-gradient(135deg, #e4e4e4, #fff);
}

.form--state {
  grid-template-columns: 196px 1fr;
  margin: 0 1px;
  padding: 5px 5px 4px 0;
  border: 1px solid #d4d4d4;
  border-radius: 2px;
}

.form--state label {
  padding-right: 2px;
  line-height: 23px;
}

.grid--links {
  margin: 0 2px 3px 1px;
}

.links td:nth-child(3) {
  padding-left: 3px;
}

.links td.ind {
  border-bottom: 1px solid #0f7dbd;
}

.links tbody tr:nth-child(odd) {
  background: #f8f8f8;
}

.links tbody tr:nth-child(even) {
  background: #ecf6fe;
}

.links .tall td {
  height: 34px;
}

.links .sel td:nth-child(n+3) {
  border: solid #85702c;
  border-width: 1px 0;
  background: #7a96df;
  color: #fff;
}

.links .sel td:last-child {
  border-right-width: 1px;
}

.links td.focus {
  border: 1px solid #000;
  border-right: 0;
}

.links a {
  color: #00f;
}

/* right */

.infotabs {
  display: flex;
  flex: none;
  align-items: flex-end;
  gap: 2px;
  height: 26px;
  padding-left: 4px;
  border-bottom: 1px solid #0f7dbd;
  background: #efefef;
}

.infotab {
  gap: 5px;
  height: 23px;
  padding: 0 4px;
}

.infotab--active {
  height: 25px;
  margin-bottom: -1px;
  padding: 0 5px;
  background: #fdfdfd;
}

.info {
  display: flex;
  flex: 1;
  min-height: 0;
  padding: 0 6px 6px 0;
}

.sidetabs {
  display: flex;
  flex-direction: column;
  align-items: flex-end;
  gap: 2px;
  width: 25px;
  padding-top: 7px;
}

.sidetab {
  display: flex;
  align-items: center;
  gap: 8px;
  width: 22px;
  padding: 4px 2px 5px;
  border: 1px solid #0f7dbd;
  border-right: 0;
  border-radius: 2px 0 0 2px;
  background: linear-gradient(90deg, #fff, #f0f0f0 60%, #d4d4d4);
  writing-mode: vertical-rl;
}

.sidetab svg {
  transform: rotate(90deg);
}

.sidetab--active {
  z-index: 1;
  width: 26px;
  margin-right: -1px;
  background: #fdfdfd;
}

.help {
  flex: 1;
  min-width: 0;
  padding: 20px 4px 0 10px;
  overflow: hidden;
  border: 1px solid #0f7dbd;
  border-radius: 2px;
  background: #ffffe1;
  box-shadow: 1px 2px 2px #bbb;
  font-family: Lato, sans-serif;
  font-size: 14px;
  line-height: 18px;
  white-space: nowrap;
}

.help h3 {
  margin-bottom: 15px;
  font-weight: bold;
}

.help p {
  margin-bottom: 14px;
}
```

FILE: script.js
```js
const
colors = {
  w: '#ffffff',
  g: '#008000',
  l: '#32cd32',
  y: '#ffff00',
  o: '#ffa500',
  t: '#ff6347',
  r: '#ff0000'
},

// guides, icon, code, title, swatches, info icon
// guides: | line, + tee, L last child, - open node, = open node (last child), . blank
rows = [
  ['|.+', 'book', '7.5.1', 'Allgemeines', 'ww', 1],
  ['|.+', 'book', '7.5.2', 'Erstellen und Aktualisieren', 'ww', 1],
  ['|.L', 'book', '7.5.3', 'Lenkung dokumentierter Information', 'ww', 1],
  ['-', 'dot', '8', 'Betrieb', '', 0],
  ['|+', 'book', '8.1', 'Betriebliche Planung und Steuerung', 'ww', 1],
  ['|+', 'book', '8.2', 'Informationssicherheitsrisikobeurteilung', 'ww', 1],
  ['|L', 'book', '8.3', 'Informationssicherheitsrisikobehandlung', 'ww', 1],
  ['-', 'dot', '9', 'Bewertung der Leistung', '', 0],
  ['|+', 'book', '9.1', 'Überwachung, Messung, Analyse und Be...', 'ot', 1],
  ['|+', 'book', '9.2', 'Internes Audit', 'yt', 1],
  ['|L', 'book', '9.3', 'Managementbewertung', 'lo', 1],
  ['-', 'dot', '10', 'Verbesserung', '', 0],
  ['|+', 'book', '10.1', 'Nichtkonformität und Korrekturmaßnah...', 'gt', 1],
  ['|L', 'book', '10.2', 'Fortlaufende Verbesserung', 'gt', 1],
  ['-', 'dot', 'A.5', 'Informationssicherheitsrichtlinien', '', 0],
  ['|=', 'target', 'A.5.1', 'Vorgaben der Leitung für Informationssi...', '', 1],
  ['|.+', 'c', 'A.5.1.1', 'Informationssicherheitsrichtlinien', 'ly', 1],
  ['|.L', 'c', 'A.5.1.2', 'Überprüfung der Informationssicherheits...', 'ly', 1],
  ['-', 'dot', 'A.6', 'Organisation der Informationssicherheit', '', 0],
  ['|-', 'target', 'A.6.1', 'Interne Organisation', '', 1],
  ['||+', 'c', 'A.6.1.1', 'Informationssicherheitsrollen und&nbsp; -vera...', 'gr', 1],
  ['||+', 'c', 'A.6.1.2', 'Aufgabentrennung', 'ww', 1],
  ['||+', 'c', 'A.6.1.3', 'Kontakt mit Behörden', 'lo', 1, 'sel'],
  ['||+', 'c', 'A.6.1.4', 'Kontakt mit speziellen Interessensgruppen', 'lr', 1],
  ['||L', 'c', 'A.6.1.5', 'Informationssicherheit im Projektmanag...', 'go', 1],
  ['|=', 'target', 'A.6.2', 'Mobilgeräte und Telearbeit', '', 0],
  ['|.+', 'c', 'A.6.2.1', 'Richtlinie zu Mobilgeräten', 'yo', 1],
  ['|.L', 'c', 'A.6.2.2', 'Telearbeit', 'yo', 1],
  ['-', 'dot', 'A.7', 'Personalsicherheit', '', 0],
  ['|-', 'target', 'A.7.1', 'Vor der Beschäftigung', '', 0],
  ['||+', 'c', 'A.7.1.1', 'Sicherheitsüberprüfung', 'gr', 1],
  ['||L', 'c', 'A.7.1.2', 'Beschäftigungs- und Vertragsbedingung...', 'gr', 1],
  ['|-', 'target', 'A.7.2', 'Während der Beschäftigung', '', 0],
  ['||+', 'c', 'A.7.2.1', 'Verantwortlichkeiten der Leitung', 'gy', 1],
  ['||+', 'c', 'A.7.2.2', 'Informationssicherheitsbewusstsein, aus...', 'gy', 1],
  ['||L', 'c', 'A.7.2.3', 'Maßregelungsprozess', 'gy', 1],
  ['|=', 'target', 'A.7.3', 'Beendigung und Änderung', '', 0]
],

icon = (name) => name === 'c'
  ? '<b class="cico node__icon">C</b>'
  : `<svg class="node__icon"><use href="#i-${name}"/></svg>`,

guide = (type) => {
  const box = '<svg><use href="#i-minusbox"/></svg>';
  switch (type) {
    case '|': return '<span class="guide guide--line"></span>';
    case '+': return '<span class="guide guide--tee"></span>';
    case 'L': return '<span class="guide guide--end"></span>';
    case '-': return `<span class="guide guide--tee">${box}</span>`;
    case '=': return `<span class="guide guide--end">${box}</span>`;
    default: return '<span class="guide"></span>';
  }
},

swatch = (key) => key ? `<div class="swatch" style="background:${colors[key]}"></div>` : '',

row = ([guides, ico, code, title, sw, info, cls]) => `
  <tr class="${cls || ''}">
    <td class="ind">${cls ? '<svg class="cursor" viewBox="0 0 4 8"><path d="M0 0l4 4-4 4z"/></svg>' : ''}</td>
    <td class="code"><div class="node">${[...guides].map(guide).join('')}${icon(ico)}<span class="node__text">${code}</span></div></td>
    <td>${title}</td>
    <td class="sw">${swatch(sw[0])}</td>
    <td class="sw">${swatch(sw[1])}</td>
    <td class="inf">${info ? '<svg><use href="#i-info"/></svg>' : ''}</td>
  </tr>`;

document.querySelector('#tree').innerHTML = rows.map(row).join('');
```
